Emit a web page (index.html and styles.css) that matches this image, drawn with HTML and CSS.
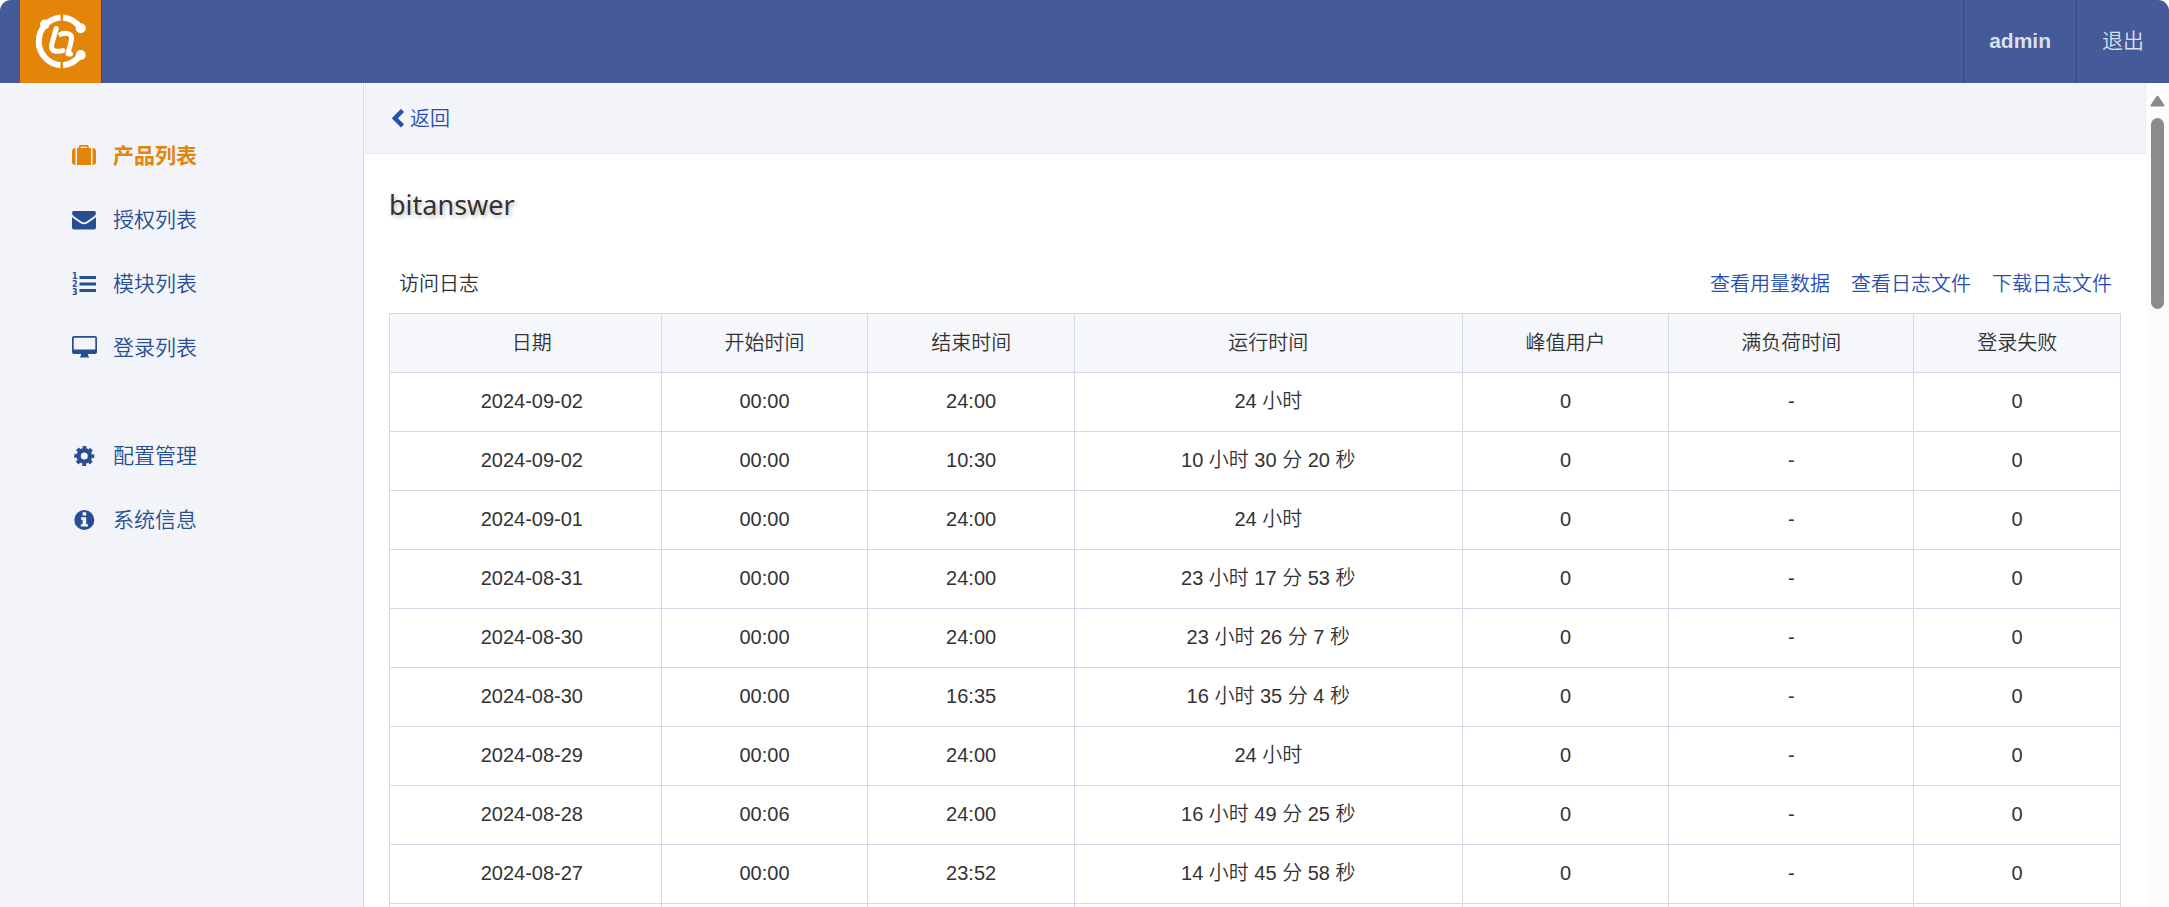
FILE: index.html
```html
<!DOCTYPE html>
<html lang="zh-CN">
<head>
<meta charset="utf-8">
<title>bitanswer - 访问日志</title>
<link rel="stylesheet" href="styles.css">
</head>
<body>
<header class="topbar">
  <a class="logo" href="#" aria-label="首页">
    <svg width="56" height="60" viewBox="33 12 56 60" fill="none" stroke="#fff">
      <path d="M60.5 17.6A23.9 23.9 0 0 0 60.5 65.2M63 17.6A23.9 23.9 0 0 1 80.5 28.3M63 65.2A23.9 23.9 0 0 0 80.5 54.8" stroke-width="6"/>
      <g fill="#fff" stroke="none"><circle cx="80.7" cy="28.3" r="5"/><circle cx="80.7" cy="55" r="5"/><circle cx="44.8" cy="24.3" r="4.8"/></g>
      <path d="M56.200 28.500L51.700 44.500Q50.600 51.300 57.200 51.300Q61.500 51.300 63 50.500" stroke-width="5" stroke-linecap="round"/>
      <path d="M60.800 34.300Q64 32.800 68 33.600Q72.600 35 71.300 40.500L68 53.900H70.500" stroke-width="5" stroke-linecap="round" stroke-linejoin="round"/>
    </svg>
  </a>
  <nav class="account">
    <a class="user" href="#">admin</a>
    <a href="#">退出</a>
  </nav>
</header>
<div class="layout">
  <nav class="sidebar">
    <a class="item active" href="#">
      <svg width="26" height="24" viewBox="0 0 26 24" fill="currentColor"><path d="M0 7.5Q0 4 3.500 4V21Q0 21 0 18zM24 7.5Q24 4 20.500 4V21Q24 21 24 18zM5 4H6.800V2.500Q6.800 1 8.300 1H15.200Q16.700 1 16.700 2.500V4H19V21H5zM8.500 4H15V2.700H8.500z" fill-rule="evenodd"/></svg>
      产品列表</a>
    <a class="item" href="#">
      <svg width="26" height="24" viewBox="0 0 26 24" fill="currentColor"><path d="M0 5Q0 3 2 3H22Q24 3 24 5Q24 7 21.5 8.8L14.3 13.7Q12 15.2 9.700 13.700L2.500 8.800Q0 7 0 5zM0 9.200L8.500 15.200Q12 17.500 15.500 15.200L24 9.200V19.500Q24 21.500 22 21.500H2Q0 21.500 0 19.500z"/></svg>
      授权列表</a>
    <a class="item" href="#">
      <svg width="26" height="24" viewBox="0 0 26 24" fill="currentColor"><path d="M7.500 4H24V7H7.500zM7.500 10.500H24V13.500H7.500zM7.500 17H24V20H7.500z"/><g class="marks"><text x="0" y="7">1</text><text x="0" y="15">2</text><text x="0" y="23">3</text></g></svg>
      模块列表</a>
    <a class="item" href="#">
      <svg width="26" height="24" viewBox="0 0 26 24" fill="currentColor"><path d="M2 0H23Q25 0 25 2V16Q25 18 23 18H16V19.500Q17 20 17 21.500H8Q8 20 9 19.500V18H2Q0 18 0 16V2Q0 0 2 0zM2.300 1.700Q1.700 1.700 1.700 2.300V13.500H23.300V2.300Q23.300 1.700 22.700 1.700z" fill-rule="evenodd"/></svg>
      登录列表</a>
    <a class="item group" href="#">
      <svg width="26" height="24" viewBox="0 0 26 24"><g fill="none" stroke="currentColor"><circle cx="12.300" cy="12" r="5.700" stroke-width="4.400"/><circle cx="12.300" cy="12" r="8.600" stroke-width="2.800" stroke-dasharray="3.800 2.954" stroke-dashoffset="1.900"/></g></svg>
      配置管理</a>
    <a class="item" href="#">
      <svg width="26" height="24" viewBox="0 0 26 24"><circle cx="12.300" cy="12" r="10" fill="currentColor"/><path d="M10.600 4.200H14.200V7.400H10.600zM9 9.300H14.200V16.200H16V18.600H8.800V16.200H10.600V11.700H9z" fill="#f2f4f9"/></svg>
      系统信息</a>
  </nav>
  <main class="content">
    <div class="crumb">
      <a class="back" href="#"><svg width="14" height="20" viewBox="0 0 14 20" fill="none" stroke="currentColor" stroke-width="4.400"><path d="M10.500 1.500L2.900 9.200L10.500 16.900"/></svg>返回</a>
    </div>
    <h1 class="title">bitanswer</h1>
    <div class="caption">
      <h2 class="subtitle">访问日志</h2>
      <div class="links"><a href="#">查看用量数据</a><a href="#">查看日志文件</a><a href="#">下载日志文件</a></div>
    </div>
    <table class="log">
      <colgroup><col class="w-date"><col class="w-time"><col class="w-time"><col class="w-run"><col class="w-time"><col class="w-full"><col class="w-time"></colgroup>
      <thead><tr><th>日期</th><th>开始时间</th><th>结束时间</th><th>运行时间</th><th>峰值用户</th><th>满负荷时间</th><th>登录失败</th></tr></thead>
      <tbody>
        <tr><td>2024-09-02</td><td>00:00</td><td>24:00</td><td>24 小时</td><td>0</td><td>-</td><td>0</td></tr>
        <tr><td>2024-09-02</td><td>00:00</td><td>10:30</td><td>10 小时 30 分 20 秒</td><td>0</td><td>-</td><td>0</td></tr>
        <tr><td>2024-09-01</td><td>00:00</td><td>24:00</td><td>24 小时</td><td>0</td><td>-</td><td>0</td></tr>
        <tr><td>2024-08-31</td><td>00:00</td><td>24:00</td><td>23 小时 17 分 53 秒</td><td>0</td><td>-</td><td>0</td></tr>
        <tr><td>2024-08-30</td><td>00:00</td><td>24:00</td><td>23 小时 26 分 7 秒</td><td>0</td><td>-</td><td>0</td></tr>
        <tr><td>2024-08-30</td><td>00:00</td><td>16:35</td><td>16 小时 35 分 4 秒</td><td>0</td><td>-</td><td>0</td></tr>
        <tr><td>2024-08-29</td><td>00:00</td><td>24:00</td><td>24 小时</td><td>0</td><td>-</td><td>0</td></tr>
        <tr><td>2024-08-28</td><td>00:06</td><td>24:00</td><td>16 小时 49 分 25 秒</td><td>0</td><td>-</td><td>0</td></tr>
        <tr><td>2024-08-27</td><td>00:00</td><td>23:52</td><td>14 小时 45 分 58 秒</td><td>0</td><td>-</td><td>0</td></tr>
        <tr><td></td><td></td><td></td><td></td><td></td><td></td><td></td></tr>
      </tbody>
    </table>
  </main>
  <div class="scrollbar" aria-hidden="true">
    <svg width="15" height="12" viewBox="0 0 15 12" fill="#8b8b8b" stroke="#8b8b8b" stroke-width="2" stroke-linejoin="round"><path d="M7.500 1.500L13.500 10.500H1.500z"/></svg>
    <div class="thumb"></div>
  </div>
</div>
</body>
</html>
```
FILE: styles.css
```css
* {
  box-sizing: border-box;
}

body {
  margin: 0;
  height: 100vh;
  display: flex;
  flex-direction: column;
  overflow: hidden;
  background: #fff;
  color: #333;
  font-family: "Liberation Sans", "Noto Sans CJK SC", sans-serif;
  font-size: 20px;
  font-weight: 350;
  line-height: 28px;
}

a {
  color: #2a4db3;
  text-decoration: none;
}

.topbar {
  flex: none;
  display: flex;
  justify-content: space-between;
  height: 83px;
  padding-left: 20px;
  border-radius: 11px 11px 0 0;
  background: #455a98;
}

.logo {
  display: flex;
  align-items: center;
  justify-content: center;
  width: 82px;
  background: #e38509;
  border-right: 1px solid #34467f;
}

.account {
  display: flex;
  font-size: 21px;
}

.account a {
  display: flex;
  align-items: center;
  padding: 0 25px 2px;
  border-left: 1px solid #364a88;
  color: #d9dfec;
}

.account .user {
  font-weight: 700;
}

.layout {
  flex: 1;
  display: flex;
  min-height: 0;
}

.sidebar {
  flex: none;
  width: 364px;
  padding: 41px 0 0 72px;
  background: #f2f4f9;
  border-right: 1px solid #d5dcec;
}

.item {
  display: flex;
  align-items: center;
  gap: 15px;
  height: 64px;
  font-size: 21px;
  color: #284e92;
}

.item.active {
  color: #e38509;
  font-weight: 700;
}

.item.group {
  margin-top: 44px;
}

.marks {
  font: 700 8px "DejaVu Sans", sans-serif;
}

.content {
  flex: 1;
  min-width: 0;
  overflow: hidden;
  padding-left: 1px;
}

.crumb {
  display: flex;
  align-items: center;
  height: 71px;
  padding: 1px 0 0 26px;
  background: #f3f4f9;
  border: 1px solid #e8eaf0;
  border-top: 0;
}

.back {
  display: flex;
  align-items: center;
  gap: 4px;
}

.title {
  margin: 31px 24px 0;
  font: 400 27px/40px "Noto Sans", "Open Sans", sans-serif;
  text-shadow: 2px 2px 4px #bbb;
}

.caption {
  display: flex;
  align-items: center;
  justify-content: space-between;
  height: 60px;
  margin: 28px 25px 0 24px;
  padding: 2px 9px 0 10px;
}

.subtitle {
  margin: 0;
  font-size: 20px;
  font-weight: 350;
}

.links {
  display: flex;
  gap: 21px;
}

.log {
  width: calc(100% - 49px);
  margin-left: 24px;
  table-layout: fixed;
  border-collapse: collapse;
}

.log th,
.log td {
  height: 59px;
  padding: 0 0 2px;
  border: 1px solid #d2d8e8;
  text-align: center;
  font-weight: 350;
}

.log th {
  padding-bottom: 0;
  background: #f5f7fb;
}

.log th:first-child,
.log td:first-child {
  padding-left: 13px;
}

.w-date {
  width: 15.7%;
}

.w-time {
  width: 11.94%;
}

.w-run {
  width: 22.4%;
}

.w-full {
  width: 14.16%;
}

.scrollbar {
  flex: none;
  display: flex;
  flex-direction: column;
  align-items: center;
  gap: 11px;
  width: 23px;
  padding-top: 12px;
  background: #fcfcfc;
}

.thumb {
  width: 13px;
  height: 191px;
  border-radius: 7px;
  background: #8b8b8b;
}
```
